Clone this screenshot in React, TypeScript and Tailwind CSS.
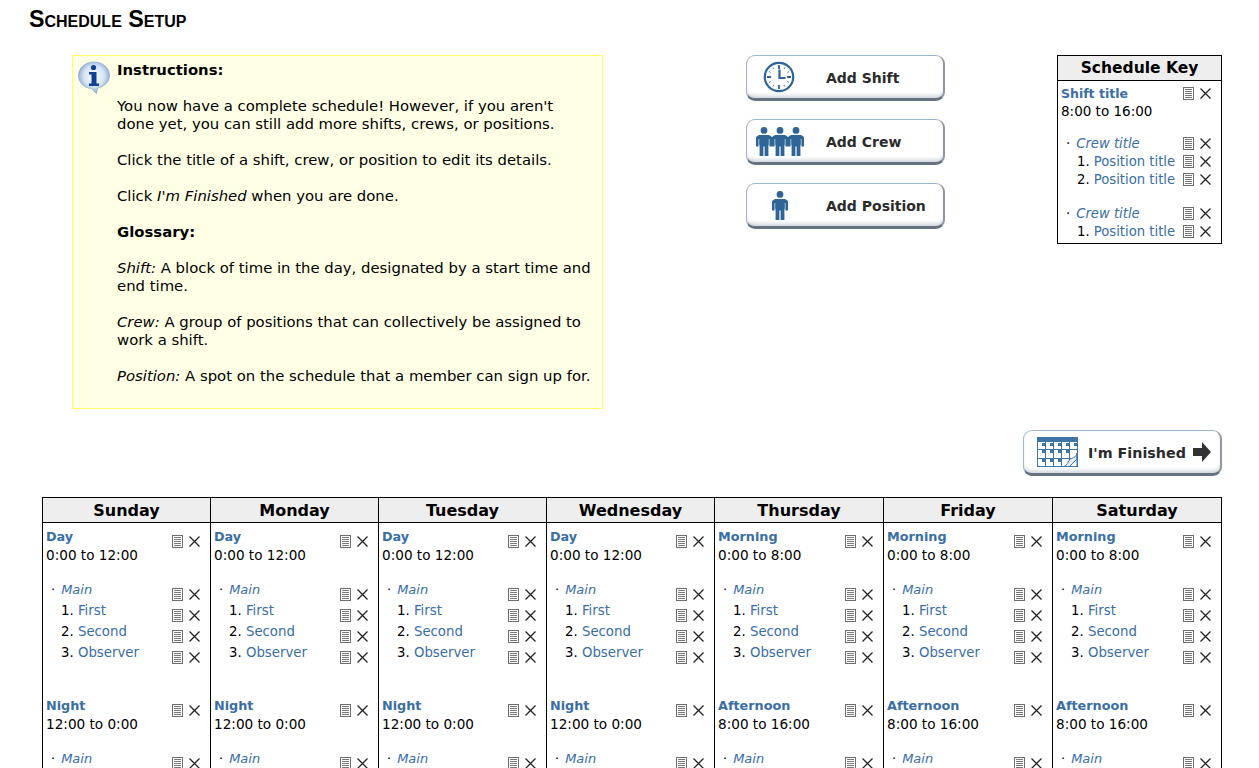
const font = "font-['DejaVu_Sans',Verdana,sans-serif]";

function NoteIcon() {
  return (
    <svg width="11" height="13" viewBox="0 0 11 13" className="shrink-0">
      <rect x="0.5" y="0.5" width="10" height="12" fill="#fff" stroke="#6e6e6e" />
      <path d="M2 2.500h7M2 4.500h7M2 6.500h7M2 8.500h7M2 10.500h7" stroke="#777" strokeWidth="1" fill="none" />
    </svg>
  );
}

function CloseIcon() {
  return (
    <svg width="11" height="11" viewBox="0 0 11 11" className="shrink-0">
      <path d="M0.500 0.500l10 10M10.500 0.500l-10 10" stroke="#222" strokeWidth="1.300" fill="none" />
    </svg>
  );
}

function Actions({ className = '' }: { className?: string }) {
  return (
    <div className={`flex items-center gap-[6px] ${className}`}>
      <NoteIcon />
      <CloseIcon />
    </div>
  );
}

function Person({ x = 0 }: { x?: number }) {
  return (
    <g transform={`translate(${x} 0)`}>
      <circle cx="8" cy="3.400" r="3.400" />
      <path d="M3 8H13L16 10V19.500H13.400V12H12.800V17.500L12.400 18.500V29H8.600V19.500H7.400V29H3.600V18.500L3.200 17.500V12H2.600V19.500H0V10Z" />
    </g>
  );
}

function ClockIcon() {
  return (
    <svg width="32" height="32" viewBox="0 0 32 32" className="mr-[3px]">
      <circle cx="16" cy="16" r="14.200" fill="none" stroke="#2f6496" strokeWidth="2.200" />
      <path d="M16 4v4M16 24v4M4 16h4M24 16h4" stroke="#2f6496" strokeWidth="1.800" />
      <path d="M16.500 8.500v8.500h6" stroke="#2f6496" strokeWidth="2.200" fill="none" />
      <path d="M22 6.500l-1 1.500M26 10.500l-1.500 1M26 21.500l-1.500-1M22 25.500l-1-1.500M10 25.500l1-1.500M6 21.500l1.500-1M6 10.500l1.500 1M10 6.500l1 1.500" stroke="#2f6496" strokeWidth="0.900" />
    </svg>
  );
}

function CrewIcon() {
  return (
    <svg width="48" height="29" viewBox="0 0 48 29" fill="#2f6496">
      <Person x={0} />
      <Person x={16} />
      <Person x={32} />
    </svg>
  );
}

function PositionIcon() {
  return (
    <svg width="16" height="29" viewBox="0 0 16 29" fill="#2f6496">
      <Person />
    </svg>
  );
}

function CalendarIcon() {
  return (
    <svg width="41" height="30" viewBox="0 0 41 30">
      <rect x="0.500" y="0.500" width="40" height="29" fill="#fff" stroke="#3f74a6" />
      <rect x="0" y="0" width="41" height="5" fill="#3f74a6" />
      <path d="M0 12.500h41M0 21.500h41M8.500 5v25M16.500 5v25M24.500 5v25M32.500 5v25" stroke="#3f74a6" strokeWidth="1" />
      <path d="M5 6h3v3H5zM13 6h3v3h-3zM21 6h3v3h-3zM29 6h3v3h-3zM37 6h3v3h-3zM5 13h3v3H5zM13 13h3v3h-3zM21 13h3v3h-3zM29 13h3v3h-3zM5 22h3v3H5zM13 22h3v3h-3zM21 22h3v3h-3z" fill="#3f74a6" />
      <path d="M25 30c6-1 6-6 8-8 2-1 6-1 7-6v6l-8 8z" fill="#e4ebf3" stroke="#3f74a6" />
      <path d="M27 29.500h13V18" fill="none" stroke="#3f74a6" />
    </svg>
  );
}

function ArrowIcon() {
  return (
    <svg width="18" height="20" viewBox="0 0 18 20" fill="#333">
      <path d="M0 6h9V0l9 10-9 10v-6H0z" />
    </svg>
  );
}

function InfoIcon() {
  return (
    <svg width="32" height="33" viewBox="0 0 32 33" className="shrink-0">
      <defs>
        <radialGradient id="bubble" cx="50%" cy="45%" r="60%">
          <stop offset="0%" stopColor="#ffffff" />
          <stop offset="55%" stopColor="#d6e4f4" />
          <stop offset="100%" stopColor="#6f93c0" />
        </radialGradient>
      </defs>
      <path d="M16 1C7.500 1 0.500 6.500 0.500 14.500c0 7 5.500 12.500 13 13l5 5 1-5.500C26 26 31.500 21 31.500 14.500 31.500 6.500 24.500 1 16 1z" fill="url(#bubble)" stroke="#8aa6c8" strokeWidth="0.700" />
      <circle cx="15.500" cy="6.500" r="2.600" fill="#123f93" />
      <path d="M11 11h7.500v11.500H21V25H11v-2.500h2.500V13.500H11z" fill="#123f93" />
    </svg>
  );
}

function ActionButton({ icon, label }: { icon: React.ReactNode; label: string }) {
  return (
    <button className="flex items-center w-[199px] h-[46px] rounded-[9px] bg-white border border-[#9db6d2] border-b-[3px] border-b-[#66727f] border-r-2 border-r-[#8d99a6] shadow-[inset_0_-4px_4px_-2px_#c9ced4]">
      <span className="w-[66px] flex justify-center items-center">{icon}</span>
      <span className="ml-[13px] pt-[2px] text-[14px] font-bold text-[#2b2b2b]">{label}</span>
    </button>
  );
}

function ScheduleKey() {
  const row = 'flex items-center justify-between h-[18px]';
  const link = 'text-[#3a6ea5]';
  const actions = 'pb-[2px]';
  return (
    <div className="w-[165px] h-[189px] border border-black text-[13.5px]">
      <div className="h-[25px] flex items-center justify-center pt-[2px] bg-[#eeeeee] border-b border-black text-[15.5px] font-bold text-black">
        Schedule Key
      </div>
      <div className="pl-[3px] pr-[10px] pt-[4px] leading-[18px]">
        <div className={row}>
          <span className={`font-bold text-[12.5px] ${link}`}>Shift title</span>
          <Actions className={actions} />
        </div>
        <div className="h-[18px] leading-[16px]">8:00 to 16:00</div>
        <div className="h-[14px]" />
        <div className={row}>
          <span className={`pl-[5px] italic text-[13.2px] ${link}`}><span className="not-italic text-black mr-[6px]">·</span>Crew title</span>
          <Actions className={actions} />
        </div>
        <div className={row}>
          <span className="pl-[16px] text-[13.2px] whitespace-nowrap">1. <span className={link}>Position title</span></span>
          <Actions className={actions} />
        </div>
        <div className={row}>
          <span className="pl-[16px] text-[13.2px] whitespace-nowrap">2. <span className={link}>Position title</span></span>
          <Actions className={actions} />
        </div>
        <div className="h-[16px]" />
        <div className={row}>
          <span className={`pl-[5px] italic text-[13.2px] ${link}`}><span className="not-italic text-black mr-[6px]">·</span>Crew title</span>
          <Actions className={actions} />
        </div>
        <div className={row}>
          <span className="pl-[16px] text-[13.2px] whitespace-nowrap">1. <span className={link}>Position title</span></span>
          <Actions className={actions} />
        </div>
      </div>
    </div>
  );
}

type Shift = { title: string; time: string };

const dayShifts: Shift[] = [
  { title: 'Day', time: '0:00 to 12:00' },
  { title: 'Night', time: '12:00 to 0:00' },
];
const threeShifts: Shift[] = [
  { title: 'Morning', time: '0:00 to 8:00' },
  { title: 'Afternoon', time: '8:00 to 16:00' },
];

const days = [
  { name: 'Sunday', width: 'w-[168px]', shifts: dayShifts },
  { name: 'Monday', width: 'w-[168px]', shifts: dayShifts },
  { name: 'Tuesday', width: 'w-[168px]', shifts: dayShifts },
  { name: 'Wednesday', width: 'w-[168px]', shifts: dayShifts },
  { name: 'Thursday', width: 'w-[169px]', shifts: threeShifts },
  { name: 'Friday', width: 'w-[169px]', shifts: threeShifts },
  { name: 'Saturday', width: 'w-[169px]', shifts: threeShifts },
];

const positions = ['First', 'Second', 'Observer'];

function ShiftBlock({ shift }: { shift: Shift }) {
  return (
    <div className="h-[169px]">
      <div className="relative h-[19px] leading-[19px] text-[12.8px] font-bold text-[#3a6ea5]">
        {shift.title}
        <Actions className="absolute right-[10px] top-[8px]" />
      </div>
      <div className="h-[19px] leading-[19px]">{shift.time}</div>
      <div className="h-[14px]" />
      <div className="relative h-[21px] leading-[21px] pl-[5px] italic text-[13px] text-[#3a6ea5]">
        <span className="not-italic text-black mr-[6px]">·</span>Main
        <Actions className="absolute right-[10px] top-[9px]" />
      </div>
      {positions.map((p, i) => (
        <div key={p} className="relative h-[21px] leading-[21px] pl-[15px] text-[13.3px]">
          {i + 1}. <span className="text-[#3a6ea5]">{p}</span>
          <Actions className="absolute right-[10px] top-[9px]" />
        </div>
      ))}
    </div>
  );
}

export default function App() {
  return (
    <div className={`${font} h-screen overflow-hidden bg-white text-black text-[14px] relative`}>
      <h1 className="pl-[29px] pt-[5px] h-[55px] text-[23.2px] leading-[28px] font-bold [font-variant:small-caps] font-['Liberation_Sans',Arial,sans-serif]">
        Schedule Setup
      </h1>

      <div className="flex items-start pl-[72px] pr-[37px]">
        <div className="flex w-[531px] h-[354px] border border-[#ffff66] bg-[#ffffe6] pl-[5px] pt-[5px] gap-[7px]">
          <InfoIcon />
          <div className="w-[476px] -mt-[5px] text-[14.85px] leading-[18px] pt-[5px]">
            <p className="font-bold">Instructions:</p>
            <p className="mt-[18px]">You now have a complete schedule! However, if you aren't done yet, you can still add more shifts, crews, or positions.</p>
            <p className="mt-[18px]">Click the title of a shift, crew, or position to edit its details.</p>
            <p className="mt-[18px]">Click <em>I'm Finished</em> when you are done.</p>
            <p className="mt-[18px] font-bold">Glossary:</p>
            <p className="mt-[18px]"><em>Shift:</em> A block of time in the day, designated by a start time and end time.</p>
            <p className="mt-[18px]"><em>Crew:</em> A group of positions that can collectively be assigned to work a shift.</p>
            <p className="mt-[18px]"><em>Position:</em> A spot on the schedule that a member can sign up for.</p>
          </div>
        </div>

        <div className="ml-[143px] flex flex-col gap-[18px]">
          <ActionButton icon={<ClockIcon />} label="Add Shift" />
          <ActionButton icon={<CrewIcon />} label="Add Crew" />
          <ActionButton icon={<PositionIcon />} label="Add Position" />
        </div>

        <div className="ml-auto">
          <ScheduleKey />
        </div>
      </div>

      <div className="flex justify-end pr-[37px] mt-[21px]">
        <button className="flex items-center w-[199px] h-[46px] rounded-[9px] bg-white border border-[#9db6d2] border-b-[3px] border-b-[#66727f] border-r-2 border-r-[#8d99a6] shadow-[inset_0_-4px_4px_-2px_#c9ced4] pl-[13px]">
          <CalendarIcon />
          <span className="ml-[10px] pt-[3px] text-[14.3px] font-bold text-[#2b2b2b] whitespace-nowrap">I'm Finished</span>
          <span className="ml-[7px]"><ArrowIcon /></span>
        </button>
      </div>

      <div className="flex ml-[42px] mt-[21px] w-[1180px] border-l border-t border-black">
        {days.map((d) => (
          <div key={d.name} className={`${d.width} shrink-0 border-r border-black`}>
            <div className="h-[25px] flex items-center justify-center pt-[1px] bg-[#eeeeee] border-b border-black text-[16px] font-bold">
              {d.name}
            </div>
            <div className="pl-[3px] pt-[4px] text-[13.6px]">
              {d.shifts.map((s) => (
                <ShiftBlock key={s.title} shift={s} />
              ))}
            </div>
          </div>
        ))}
      </div>
    </div>
  );
}
